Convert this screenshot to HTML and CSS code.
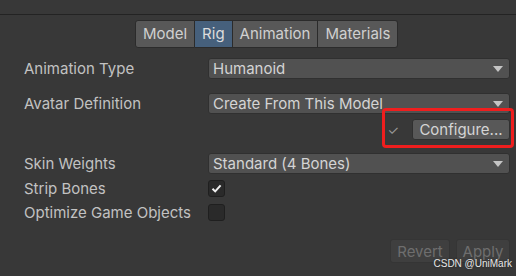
FILE: index.html
```html
<!DOCTYPE html>
<html lang="en">
<head>
  <meta charset="UTF-8" />
  <title>Import Settings - Rig</title>
  <link rel="stylesheet" href="styles.css">
</head>
<body>
  <div class="topbar"></div>

  <div class="tabs">
    <span class="tab">Model</span>
    <span class="tab active">Rig</span>
    <span class="tab">Animation</span>
    <span class="tab">Materials</span>
  </div>

  <div class="form">
    <div class="row row-first">
      <span class="label">Animation Type</span>
      <div class="dropdown">Humanoid<span class="arrow"></span></div>
    </div>
    <div class="row">
      <span class="label">Avatar Definition</span>
      <div class="dropdown">Create From This Model<span class="arrow"></span></div>
    </div>
    <div class="config-row">
      <span class="tick">&#10003;</span>
      <button class="btn">Configure...</button>
      <!-- red highlight drawn over the button -->
      <span class="highlight"></span>
    </div>
    <div class="row row-skin">
      <span class="label">Skin Weights</span>
      <div class="dropdown">Standard (4 Bones)<span class="arrow"></span></div>
    </div>
    <div class="row row-check">
      <span class="label">Strip Bones</span>
      <span class="checkbox">
        <svg width="13" height="13" viewBox="0 0 13 13"><path d="M2.5 6.8 L5.2 9.4 L10.6 3.4" fill="none" stroke="#f0f0f0" stroke-width="2"/></svg>
      </span>
    </div>
    <div class="row row-check">
      <span class="label">Optimize Game Objects</span>
      <span class="checkbox"></span>
    </div>
  </div>

  <div class="footer">
    <button class="btn disabled revert">Revert</button>
    <button class="btn disabled">Apply</button>
  </div>

  <span class="watermark">CSDN @UniMark</span>
</body>
</html>
```

FILE: styles.css
```css
* {
  box-sizing: border-box;
  margin: 0;
  padding: 0;
}

body {
  width: 516px;
  height: 276px;
  overflow: hidden;
  position: relative;
  background: #383838;
  color: #c4c4c4;
  font-family: 'Inter', 'Noto Sans', sans-serif;
  font-size: 15px;
}

.topbar {
  height: 15px;
  border-bottom: 1px solid #232323;
  background: #383838;
}

.tabs {
  display: flex;
  margin: 5px 0 0 135px;
  height: 28px;
}

.tab {
  background: #585858;
  border: 1px solid #2b2b2b;
  border-left: none;
  padding: 0 7px;
  line-height: 26px;
  font-size: 15px;
  color: #d0d0d0;
}

.tab:first-child {
  border-left: 1px solid #2b2b2b;
  border-radius: 3px 0 0 3px;
}

.tab:last-child {
  border-radius: 0 3px 3px 0;
}

.tab.active {
  background: #46607c;
  color: #dcdcdc;
}

.form {
  padding: 0 6px 0 24px;
}

.row {
  display: flex;
  align-items: center;
  height: 21px;
  margin-top: 14px;
}

.row-first {
  margin-top: 10px;
}

.row-skin {
  margin-top: 13px;
}

.row-check {
  height: 18px;
  margin-top: 5px;
}

.row-check + .row-check {
  margin-top: 6px;
}

.label {
  width: 184px;
  flex-shrink: 0;
  color: #c2c2c2;
}

.dropdown {
  flex: 1;
  height: 21px;
  position: relative;
  background: #515151;
  border: 1px solid #303030;
  border-radius: 3px;
  padding-left: 4px;
  line-height: 19px;
  color: #d4d4d4;
}

.arrow {
  position: absolute;
  right: 6px;
  top: 7px;
  width: 0;
  height: 0;
  border-left: 5px solid transparent;
  border-right: 5px solid transparent;
  border-top: 6px solid #c4c4c4;
}

.config-row {
  position: relative;
  display: flex;
  justify-content: flex-end;
  align-items: center;
  gap: 13px;
  height: 21px;
  margin-top: 5px;
}

.tick {
  color: #9a9a9a;
  font-size: 13px;
}

.btn {
  font-family: 'Inter', 'Noto Sans', sans-serif;
  font-size: 15px;
  color: #d4d4d4;
  background: #585858;
  border: 1px solid #303030;
  border-radius: 3px;
  height: 21px;
  width: 98px;
  line-height: 19px;
}

.highlight {
  position: absolute;
  left: 358px;
  top: -11px;
  width: 132px;
  height: 40px;
  border: 3px solid #ef1e1e;
  border-radius: 4px;
}

.checkbox {
  width: 17px;
  height: 17px;
  background: #2a2a2a;
  border: 1px solid #1f1f1f;
  border-radius: 3px;
  display: flex;
  align-items: center;
  justify-content: center;
}

.footer {
  display: flex;
  justify-content: flex-end;
  gap: 6px;
  padding-right: 6px;
  margin-top: 18px;
}

.btn.disabled {
  background: #3f3f3f;
  border-color: #353535;
  color: #6e6e6e;
  height: 24px;
  width: 54px;
  font-size: 15px;
}

.btn.revert {
  width: 60px;
}

.watermark {
  position: absolute;
  right: 4px;
  bottom: 7px;
  font-family: 'Liberation Sans', sans-serif;
  font-size: 10px;
  color: #e8e8e8;
  text-shadow: 0 0 2px #222;
}
```
